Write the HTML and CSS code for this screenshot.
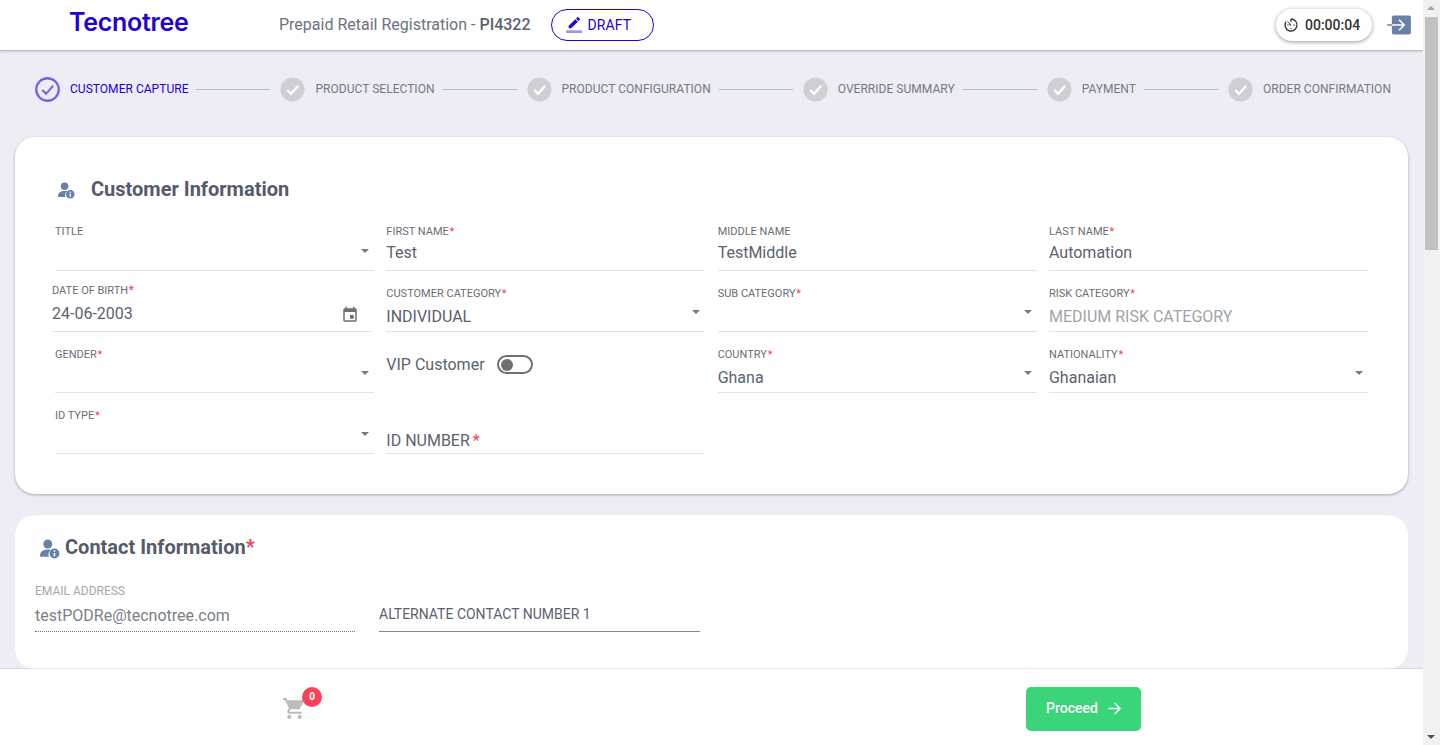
FILE: index.html
```html
<!DOCTYPE html>
<html lang="en">
<head>
  <meta charset="UTF-8" />
  <meta name="viewport" content="width=device-width, initial-scale=1.0"/>
  <title>Prepaid Retail Registration - Tecnotree</title>
  <link rel="stylesheet" href="styles.css">
</head>
<body>
  <div class="app">
    <header class="topbar">
      <div class="logo">Tecnotree</div>
      <div class="page-title">Prepaid Retail Registration - <b>PI4322</b></div>
      <button class="draft-btn" type="button">
        <svg class="draft-icon" viewBox="0 0 24 24"><path class="pencil" d="M17.75 7 14 3.25l-10 10V17h3.75l10-10zm2.96-2.96a.996.996 0 0 0 0-1.41L18.37.29a.996.996 0 0 0-1.41 0L15 2.25 18.75 6l1.96-1.96z"/><path class="bar" d="M0 20h24v4H0z"/></svg>
        DRAFT
      </button>
      <div class="topbar-right">
        <div class="timer">
          <svg class="timer-icon" viewBox="0 0 24 24"><path d="M12 3v4M12 3a9 9 0 1 1-7.5 4" fill="none" stroke="#333" stroke-width="2"/><path d="M5.5 4.5 12.5 12l-1.5 1.5z" fill="#333"/><circle cx="7.5" cy="12" r="1" fill="#333"/><circle cx="16.5" cy="12" r="1" fill="#333"/><circle cx="12" cy="17" r="1" fill="#333"/></svg>
          <span>00:00:04</span>
        </div>
        <svg class="logout" viewBox="0 0 25 21"><rect x="5" y="0.5" width="20" height="20" rx="2" fill="#6782a5"/><path d="M0 10.5h18M12.5 5l5.5 5.5-5.5 5.5" fill="none" stroke="#6782a5" stroke-width="1.6"/><path d="M5 10.5h13M12.5 5l5.5 5.5-5.5 5.5" fill="none" stroke="#fff" stroke-width="1.6"/></svg>
      </div>
    </header>

    <main class="content">
      <ol class="stepper">
        <li class="step step-active">
          <svg class="step-icon" viewBox="0 0 26 26"><circle cx="13" cy="13" r="11.7" fill="none" stroke="#7563e0" stroke-width="2.4"/><path d="m7.5 13.5 4 4 7.5-8.5" fill="none" stroke="#7563e0" stroke-width="2.2"/></svg>
          <span>CUSTOMER CAPTURE</span>
        </li>
        <li class="step-line"></li>
        <li class="step">
          <svg class="step-icon" viewBox="0 0 26 26"><circle cx="13" cy="13" r="12.5" fill="#cdcfd4"/><path d="m7.5 13.5 4 4 7.5-8.5" fill="none" stroke="#fff" stroke-width="2.4"/></svg>
          <span>PRODUCT SELECTION</span>
        </li>
        <li class="step-line"></li>
        <li class="step">
          <svg class="step-icon" viewBox="0 0 26 26"><circle cx="13" cy="13" r="12.5" fill="#cdcfd4"/><path d="m7.5 13.5 4 4 7.5-8.5" fill="none" stroke="#fff" stroke-width="2.4"/></svg>
          <span>PRODUCT CONFIGURATION</span>
        </li>
        <li class="step-line"></li>
        <li class="step">
          <svg class="step-icon" viewBox="0 0 26 26"><circle cx="13" cy="13" r="12.5" fill="#cdcfd4"/><path d="m7.5 13.5 4 4 7.5-8.5" fill="none" stroke="#fff" stroke-width="2.4"/></svg>
          <span>OVERRIDE SUMMARY</span>
        </li>
        <li class="step-line"></li>
        <li class="step">
          <svg class="step-icon" viewBox="0 0 26 26"><circle cx="13" cy="13" r="12.5" fill="#cdcfd4"/><path d="m7.5 13.5 4 4 7.5-8.5" fill="none" stroke="#fff" stroke-width="2.4"/></svg>
          <span>PAYMENT</span>
        </li>
        <li class="step-line"></li>
        <li class="step">
          <svg class="step-icon" viewBox="0 0 26 26"><circle cx="13" cy="13" r="12.5" fill="#cdcfd4"/><path d="m7.5 13.5 4 4 7.5-8.5" fill="none" stroke="#fff" stroke-width="2.4"/></svg>
          <span>ORDER CONFIRMATION</span>
        </li>
      </ol>

      <section class="card card-customer">
        <h2 class="card-title customer-title">
          <svg class="person-icon" viewBox="0 0 18 18"><circle cx="7" cy="4.5" r="4" fill="#6782a5"/><path d="M0 15c0-3.500 3-5.500 7-5.500 1 0 2 .1 2.800.4A5 5 0 0 0 8 16H1a1 1 0 0 1-1-1z" fill="#6782a5"/><circle cx="13" cy="13" r="4.500" fill="#6782a5"/><path d="M13 12.500v3M13 10.200v1.200" stroke="#fff" stroke-width="1.400"/></svg>
          Customer Information
        </h2>
        <div class="form-grid">
          <div class="field field-first">
            <label>TITLE</label>
            <div class="value"></div>
            <i class="caret"></i>
          </div>
          <div class="field field-first">
            <label>FIRST NAME <em>*</em></label>
            <div class="value">Test</div>
          </div>
          <div class="field field-first">
            <label>MIDDLE NAME</label>
            <div class="value">TestMiddle</div>
          </div>
          <div class="field field-first">
            <label>LAST NAME <em>*</em></label>
            <div class="value">Automation</div>
          </div>

          <div class="field field-date">
            <label>DATE OF BIRTH <em>*</em></label>
            <div class="value">24-06-2003</div>
            <svg class="calendar" viewBox="0 0 24 24"><path d="M17 12h-5v5h5v-5zM16 1v2H8V1H6v2H5c-1.110 0-1.990.9-1.990 2L3 19c0 1.100.89 2 2 2h14c1.100 0 2-.9 2-2V5c0-1.100-.9-2-2-2h-1V1h-2zm3 18H5V8h14v11z"/></svg>
          </div>
          <div class="field">
            <label>CUSTOMER CATEGORY <em>*</em></label>
            <div class="value">INDIVIDUAL</div>
            <i class="caret"></i>
          </div>
          <div class="field">
            <label>SUB CATEGORY <em>*</em></label>
            <div class="value"></div>
            <i class="caret"></i>
          </div>
          <div class="field field-disabled">
            <label>RISK CATEGORY <em>*</em></label>
            <div class="value">MEDIUM RISK CATEGORY</div>
          </div>

          <div class="field">
            <label>GENDER <em>*</em></label>
            <div class="value"></div>
            <i class="caret"></i>
          </div>
          <div class="toggle-row">
            <span>VIP Customer</span>
            <span class="toggle"><i></i></span>
          </div>
          <div class="field">
            <label>COUNTRY <em>*</em></label>
            <div class="value">Ghana</div>
            <i class="caret"></i>
          </div>
          <div class="field">
            <label>NATIONALITY <em>*</em></label>
            <div class="value">Ghanaian</div>
            <i class="caret"></i>
          </div>

          <div class="field">
            <label>ID TYPE <em>*</em></label>
            <div class="value"></div>
            <i class="caret"></i>
          </div>
          <div class="field field-empty">
            <div class="value placeholder">ID NUMBER <em>*</em></div>
          </div>
        </div>
      </section>

      <section class="card card-contact">
        <h2 class="card-title contact-title">
          <svg class="person-icon person-large" viewBox="0 0 18 18"><circle cx="7" cy="4.500" r="4" fill="#6782a5"/><path d="M0 15c0-3.500 3-5.500 7-5.500 1 0 2 .1 2.800.4A5 5 0 0 0 8 16H1a1 1 0 0 1-1-1z" fill="#6782a5"/><circle cx="13" cy="13" r="4.500" fill="#6782a5"/><path d="M13 12.500v3M13 10.200v1.200" stroke="#fff" stroke-width="1.400"/></svg>
          <span>Contact Information<em>*</em></span>
        </h2>
        <div class="contact-row">
          <div class="contact-field contact-readonly">
            <label>EMAIL ADDRESS</label>
            <div class="value">testPODRe@tecnotree.com</div>
          </div>
          <div class="contact-field contact-alt">
            <div class="value">ALTERNATE CONTACT NUMBER 1</div>
          </div>
        </div>
      </section>
    </main>

    <footer class="bottombar">
      <div class="cart">
        <svg class="cart-icon" viewBox="0 0 24 24"><path d="M7 18c-1.100 0-1.990.9-1.990 2S5.900 22 7 22s2-.9 2-2-.9-2-2-2zM1 2v2h2l3.600 7.590-1.350 2.450c-.16.28-.25.61-.25.96 0 1.100.9 2 2 2h12v-2H7.420c-.14 0-.25-.11-.25-.25l.03-.12.9-1.830h7.450c.75 0 1.410-.41 1.750-1.030L21.700 4H5.210l-.94-2H1zm16 16c-1.100 0-1.990.9-1.990 2s.89 2 1.990 2 2-.9 2-2-.9-2-2-2z"/></svg>
        <span class="cart-badge">0</span>
      </div>
      <button class="proceed-btn" type="button">
        Proceed
        <svg class="proceed-arrow" viewBox="0 0 16 16"><path d="M1.500 8h12.500M8 2l6 6-6 6" fill="none" stroke="#fff" stroke-width="1.500"/></svg>
      </button>
    </footer>
  </div>

  <div class="scrollbar">
    <span class="arrow-up"></span>
    <div class="thumb"></div>
    <span class="arrow-down"></span>
  </div>
</body>
</html>
```

FILE: styles.css
```css
* {
  box-sizing: border-box;
}

html, body {
  height: 100%;
}

body {
  margin: 0;
  display: flex;
  overflow: hidden;
  background: #ecedf5;
  font-family: Roboto, sans-serif;
  color: #5b6270;
}

.app {
  flex: 1;
  min-width: 0;
  height: 745px;
  display: flex;
  flex-direction: column;
}

/* top bar */
.topbar {
  height: 51px;
  flex: none;
  display: flex;
  align-items: center;
  padding: 0 12px 0 69px;
  background: white;
  border-bottom: 1px solid #bcbcc0;
  box-shadow: 0 1px 2px rgba(0, 0, 0, 0.12);
  position: relative;
}

.logo {
  width: 210px;
  margin-bottom: 7px;
  font-family: Inter, sans-serif;
  font-size: 25px;
  font-weight: 600;
  letter-spacing: -0.3px;
  color: #2400d6;
}

.page-title {
  margin-bottom: 2px;
  font-size: 16px;
  color: #6b7280;
}

.page-title b {
  font-weight: 500;
  color: #5b6270;
}

.draft-btn {
  margin-left: 20px;
  width: 103px;
  height: 32px;
  display: flex;
  align-items: center;
  gap: 6px;
  padding: 0 0 0 14px;
  background: white;
  border: 1px solid #2400d6;
  border-radius: 16px;
  font-family: Roboto, sans-serif;
  font-size: 14px;
  letter-spacing: 0.1px;
  color: #2400d6;
}

.draft-icon {
  width: 16px;
  height: 16px;
}

.pencil {
  fill: #2400d6;
}

.bar {
  fill: #a394e8;
}

.topbar-right {
  margin-left: auto;
  display: flex;
  align-items: center;
  gap: 15px;
}

.timer {
  width: 96px;
  height: 32px;
  display: flex;
  align-items: center;
  gap: 6px;
  padding-left: 7px;
  background: white;
  border-radius: 16px;
  box-shadow: 0 1px 4px rgba(0, 0, 0, 0.4);
  font-size: 14px;
  font-weight: 500;
  color: #333;
}

.timer-icon {
  width: 16px;
  height: 16px;
}

.logout {
  width: 24px;
  height: 20px;
}

/* stepper */
.content {
  flex: 1;
  min-height: 0;
  overflow: hidden;
}

.stepper {
  height: 76px;
  margin: 0 0 10px;
  padding: 0 32px 0 35px;
  list-style: none;
  display: flex;
  align-items: center;
}

.step {
  display: flex;
  align-items: center;
  gap: 10px;
  font-size: 12px;
  letter-spacing: 0.03px;
  color: #77797f;
  white-space: nowrap;
}

.step-active {
  color: #2400d6;
}

.step-icon {
  width: 25px;
  height: 25px;
}

.step-line {
  flex: 1;
  height: 1px;
  margin: 0 10px 0 8px;
  background: #b8bac2;
}

/* cards */
.card {
  margin: 0 15px;
  background: white;
  border-radius: 20px;
}

.card-customer {
  height: 357px;
  padding: 0 40px;
  box-shadow: 0 1px 3px rgba(0, 0, 0, 0.3);
}

.card-contact {
  height: 154px;
  margin-top: 21px;
  padding: 0 20px;
}

.card-title {
  margin: 0;
  display: flex;
  align-items: center;
  font-size: 20px;
  font-weight: 700;
  color: #555b6b;
}

.card-title em,
.field em,
.placeholder em {
  font-style: normal;
  color: #f5405c;
}

.customer-title {
  height: 73px;
  padding: 30px 0 0 3px;
  gap: 16px;
}

.contact-title {
  height: 62px;
  padding: 2px 0 0 5px;
  gap: 5px;
}

.person-icon {
  width: 17px;
  height: 17px;
  margin-top: 3px;
}

.person-large {
  width: 20px;
  height: 20px;
  margin-top: 4px;
}

/* form */
.form-grid {
  display: grid;
  grid-template-columns: repeat(4, 1fr);
  grid-auto-rows: 61px;
  column-gap: 12.3px;
}

.field {
  position: relative;
  padding-top: 16px;
  border-bottom: 1px solid #e2e3e6;
}

.field label {
  display: block;
  height: 13px;
  font-size: 11px;
  line-height: 13px;
  color: #6a6d75;
}

.field em {
  margin-left: -2px;
  font-size: 11px;
}

.value {
  height: 20px;
  margin-top: 7px;
  font-size: 16px;
  line-height: 20px;
  color: #5b6270;
}

.field-first {
  padding-top: 15px;
}

.field-first .value {
  margin-top: 5px;
}

.field-date {
  padding-top: 13px;
  margin: 0 3px 0 -3px;
}

.field-date em {
  font-size: 12px;
}

.field-date .value {
  margin-top: 7px;
}

.field-disabled .value {
  color: #a0a3aa;
}

.field-empty {
  padding-top: 31px;
}

.placeholder em {
  margin-left: -1px;
  font-size: 16px;
}

.caret {
  position: absolute;
  right: 5px;
  bottom: 17px;
  border-left: 4px solid transparent;
  border-right: 4px solid transparent;
  border-top: 4px solid #7a7a7a;
}

.calendar {
  position: absolute;
  right: 12px;
  bottom: 7px;
  width: 18px;
  height: 18px;
  fill: #6f7074;
}

.toggle-row {
  display: flex;
  align-items: flex-start;
  gap: 12px;
  padding-top: 23px;
  font-size: 16px;
  line-height: 20px;
  color: #5b6270;
}

.toggle {
  width: 36px;
  height: 19px;
  display: flex;
  align-items: center;
  padding-left: 2px;
  border: 2px solid #6f6f6f;
  border-radius: 10px;
}

.toggle i {
  width: 12px;
  height: 12px;
  border-radius: 50%;
  background: #6f6f6f;
}

/* contact */
.contact-row {
  display: flex;
  gap: 24px;
}

.contact-field {
  width: 320px;
  height: 55px;
  border-bottom: 1px dotted #777;
}

.contact-field label {
  display: block;
  height: 14px;
  padding-top: 7px;
  box-sizing: content-box;
  font-size: 12px;
  line-height: 14px;
  color: #a3a6ad;
}

.contact-readonly .value {
  margin-top: 8px;
  color: #7a7f8a;
}

.contact-alt {
  width: 321px;
  border-bottom: 1px solid #85878d;
}

.contact-alt .value {
  margin-top: 27px;
  font-size: 14px;
}

/* bottom bar */
.bottombar {
  height: 76px;
  flex: none;
  display: flex;
  align-items: center;
  padding-left: 282px;
  background: white;
  box-shadow: 0 -1px 1px rgba(0, 0, 0, 0.09);
  position: relative;
}

.cart {
  position: relative;
  width: 25px;
  height: 25px;
  margin-top: 3px;
}

.cart-icon {
  width: 25px;
  height: 25px;
  fill: #bdbdbd;
}

.cart-badge {
  position: absolute;
  top: -9px;
  left: 20px;
  width: 20px;
  height: 20px;
  border-radius: 50%;
  background: #fd4059;
  color: white;
  font-size: 10px;
  font-weight: 700;
  line-height: 20px;
  text-align: center;
}

.proceed-btn {
  margin-left: 719px;
  margin-top: 3px;
  width: 115px;
  height: 44px;
  display: flex;
  align-items: center;
  gap: 9px;
  padding: 0 0 2px 20px;
  background: #3ad579;
  border: none;
  border-radius: 5px;
  color: white;
  font-family: Roboto, sans-serif;
  font-size: 14px;
  font-weight: 500;
}

.proceed-arrow {
  width: 15px;
  height: 15px;
  margin-top: 2px;
}

/* page scrollbar */
.scrollbar {
  width: 17px;
  height: 745px;
  flex: none;
  position: relative;
  background: #f1f1f1;
}

.thumb {
  position: absolute;
  top: 17px;
  left: 2px;
  width: 13px;
  height: 233px;
  background: #c1c1c1;
}

.arrow-up,
.arrow-down {
  position: absolute;
  left: 4px;
  border-left: 4px solid transparent;
  border-right: 4px solid transparent;
}

.arrow-up {
  top: 6px;
  border-bottom: 4px solid #a3a3a3;
}

.arrow-down {
  bottom: 6px;
  border-top: 4px solid #505050;
}
```
